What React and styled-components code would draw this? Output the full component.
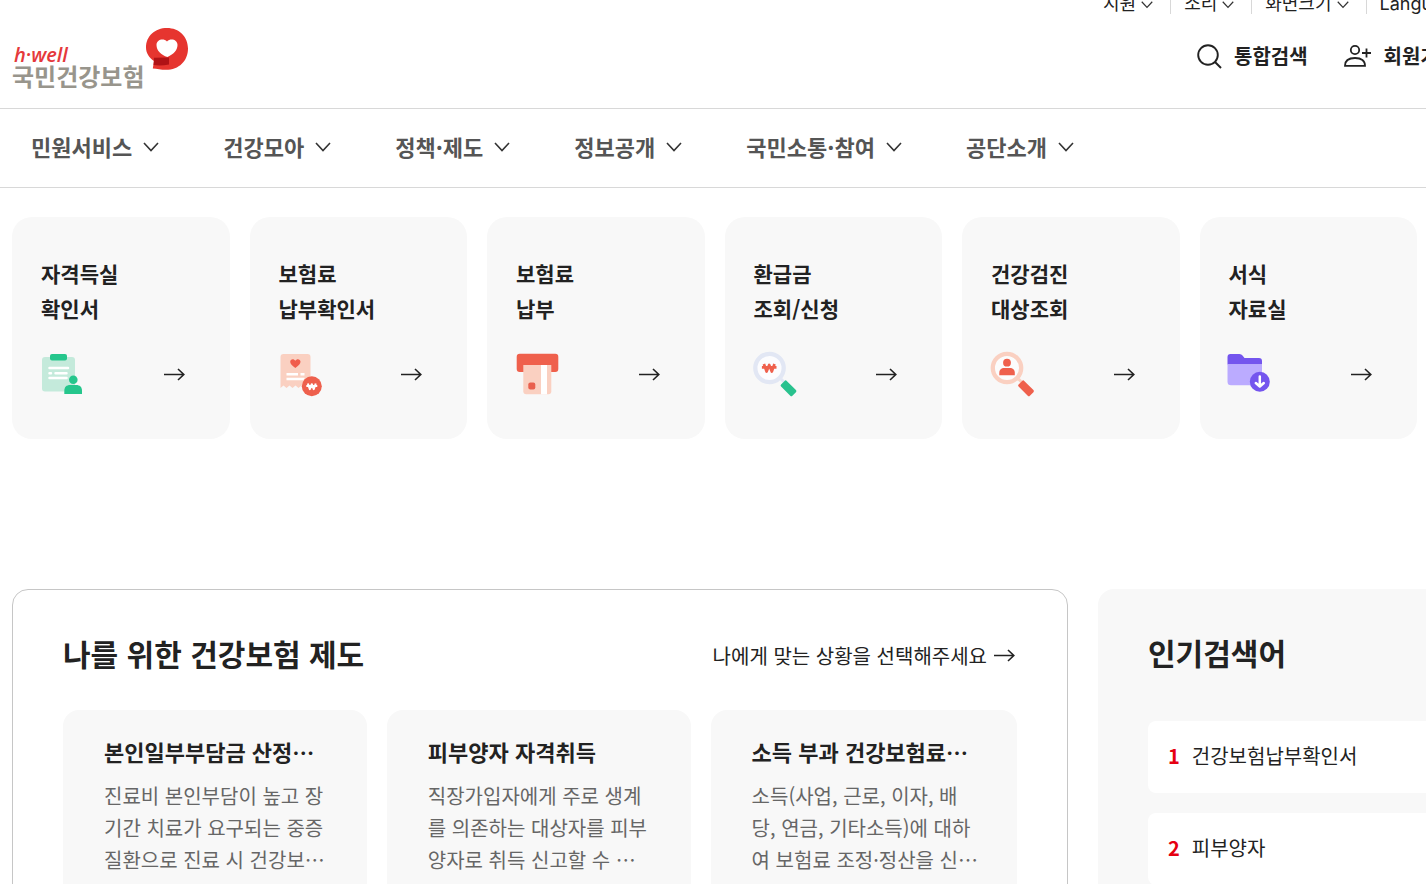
import styled, { createGlobalStyle } from "styled-components";

const GlobalStyle = createGlobalStyle`
  * {
    box-sizing: border-box;
  }

  body {
    margin: 0;
    background: #fff;
    color: #222;
    font-family: "Noto Sans CJK KR", "Noto Sans", sans-serif;
  }

  a {
    color: inherit;
    text-decoration: none;
  }

  button {
    padding: 0;
    border: none;
    background: none;
    color: inherit;
    font: inherit;
    cursor: pointer;
  }

  h1, h2, h3, p, ul, ol {
    margin: 0;
    padding: 0;
    list-style: none;
  }

  svg {
    display: block;
    flex-shrink: 0;
    overflow: visible;
  }
`;

const Page = styled.div`
  height: 100vh;
  overflow: hidden;
`;

const Header = styled.header`
  height: 109px;
  border-bottom: 1px solid #d8d8d8;
`;

const TopBar = styled.div`
  display: grid;
  grid-template-columns: 1fr 323px;
  align-items: end;
  height: 14px;
  overflow: hidden;
`;

const TopMenu = styled.ul`
  grid-column: 2;
  display: flex;
`;

const TopItem = styled.li`
  height: 22px;
  padding-right: 17px;
  margin-right: 13px;
  border-right: 1px solid #d8d8d8;
`;

const TopButton = styled.button`
  display: flex;
  align-items: center;
  gap: 5px;
  height: 22px;
  padding-bottom: 14px;
  font-family: Inter, "Noto Sans CJK KR", sans-serif;
  font-size: 18px;
  line-height: 20px;
  white-space: nowrap;
`;

const HeaderRow = styled.div`
  display: grid;
  grid-template-columns: 1fr 229px;
  align-items: start;
  padding: 14px 0 0 12px;
`;

const Logo = styled.a`
  display: flex;
  gap: 2px;
  height: 60px;
`;

const LogoText = styled.span`
  display: flex;
  flex-direction: column;
  justify-content: flex-end;
  color: #98958c;
  font-size: 24px;
  font-weight: 700;
  line-height: 24px;
  white-space: nowrap;
`;

const LogoSlogan = styled.em`
  padding-left: 2px;
  color: #e5393b;
  font-family: "Open Sans", "Noto Sans", sans-serif;
  font-size: 20px;
  font-weight: 600;
  line-height: 18px;
`;

const Actions = styled.div`
  display: flex;
  gap: 36px;
  padding-top: 13px;
`;

const ActionButton = styled.button`
  display: flex;
  align-items: center;
  gap: 12px;
  font-size: 20px;
  font-weight: 700;
  line-height: 30px;
  white-space: nowrap;
`;

const Nav = styled.nav`
  border-bottom: 1px solid #d8d8d8;
`;

const NavList = styled.ul`
  display: flex;
  gap: 64px;
  padding-left: 31px;
`;

const NavButton = styled.button`
  display: flex;
  align-items: center;
  gap: 11px;
  height: 78px;
  padding-bottom: 4px;
  color: #555;
  font-size: 22px;
  font-weight: 700;
  white-space: nowrap;
`;

const QuickList = styled.ul`
  display: grid;
  grid-template-columns: repeat(6, 1fr);
  gap: 20px;
  padding: 29px 9px 0 12px;
`;

const QuickCard = styled.a`
  display: block;
  padding: 39px 45px 40px 29px;
  border-radius: 20px;
  background: #f8f8f8;
`;

const QuickTitle = styled.strong`
  display: block;
  font-size: 21px;
  font-weight: 700;
  line-height: 35px;
  white-space: pre-line;
`;

const QuickBottom = styled.span`
  display: flex;
  align-items: center;
  justify-content: space-between;
  margin-top: 23px;
`;

const Lower = styled.div`
  display: grid;
  grid-template-columns: minmax(0, 1fr) 328px;
  gap: 30px;
  padding: 150px 0 0 12px;
`;

const Panel = styled.section`
  padding: 40px 50px;
  border: 1px solid #c6c6c6;
  border-radius: 16px;
`;

const PanelHead = styled.div`
  display: flex;
  align-items: center;
  justify-content: space-between;
  margin-bottom: 30px;
`;

const Heading = styled.h2`
  padding-bottom: 4px;
  font-size: 30px;
  font-weight: 700;
  line-height: 46px;
`;

const MoreLink = styled.a`
  display: flex;
  align-items: center;
  gap: 7px;
  padding-right: 2px;
  font-size: 20px;
`;

const PolicyList = styled.ul`
  display: grid;
  grid-template-columns: repeat(3, 1fr);
  gap: 20px;
`;

const PolicyCard = styled.li`
  padding: 23px 39px 40px 41px;
  border-radius: 16px;
  background: #f8f8f8;
`;

const PolicyTitle = styled.h3`
  margin-bottom: 11px;
  font-size: 22px;
  font-weight: 700;
  line-height: 36px;
  white-space: nowrap;
`;

const PolicyText = styled.p`
  color: #666;
  font-size: 20px;
  line-height: 32px;
  white-space: pre;
`;

const Popular = styled.section`
  padding: 40px 0 40px 50px;
  border-radius: 16px 0 0 0;
  background: #f8f8f8;
`;

const PopularList = styled.ol`
  display: grid;
  gap: 20px;
  margin-top: 42px;
`;

const PopularLink = styled.a`
  display: flex;
  align-items: center;
  gap: 12px;
  height: 72px;
  padding: 0 0 3px 20px;
  border-radius: 8px 0 0 8px;
  background: #fff;
  font-size: 20px;
`;

const Rank = styled.b`
  color: #e60012;
`;

const Chevron = ({ size = 16, color = "#333" }) => (
  <svg width={size} height={size} viewBox="0 0 16 16" fill="none" stroke={color} strokeWidth="1.6">
    <path d="M1 5l7 7.500 7-7.500" />
  </svg>
);

const Arrow = () => (
  <svg width="21" height="14" viewBox="0 0 21 14" fill="none" stroke="#222" strokeWidth="1.6">
    <path d="M0 7.500h19.500M14 2L19.800 7.500 14 13" />
  </svg>
);

const LogoMark = () => (
  <svg width="42" height="42" viewBox="0 0 42 42">
    <path
      d="M21 0C33 0 42 8.500 42 20.500C42 33 33 41.800 20 41.800C15 41.800 11 40.800 6.800 40.500L8 33C3 29.500 0 25 0 19.500C0 8 9 0 21 0Z"
      fill="#e6352f"
    />
    <path
      d="M21.500 29C15 27 10.500 22.500 10.500 17C10.500 11.500 17.500 9.800 21 13.500C24.500 9.800 31.500 11.500 31.500 17C31.500 22 28 26 21.500 29Z"
      fill="#fff"
    />
    <path d="M8 29.800L23 29.500V36.500Q15 38 7.600 37Z" fill="#b01216" />
  </svg>
);

const SearchIcon = () => (
  <svg width="25" height="25" viewBox="0 0 25 25" fill="none" stroke="#222" strokeWidth="1.9">
    <circle cx="11" cy="11" r="9.800" />
    <path d="M18 18l6 6" />
  </svg>
);

const JoinIcon = () => (
  <svg width="28" height="24" viewBox="0 0 28 24" fill="none" stroke="#222" strokeWidth="1.8">
    <circle cx="11" cy="6" r="4.200" />
    <path d="M1 21.800C1 16.500 4.500 14 11 14s10 2.500 10 7.800zM18 9h9M22.500 4.500v9" />
  </svg>
);

const Won = ({ x, y, color, scale = 1 }) => (
  <path
    transform={`translate(${x} ${y}) scale(${scale})`}
    d="M-5.300-4l2.700 7.500L0-3 2.600 3.500l2.700-7.500M-7.300-.600H7.300"
    fill="none"
    stroke={color}
    strokeWidth="2.700"
    strokeLinejoin="round"
  />
);

const CertificateIcon = () => (
  <svg width="50" height="50" viewBox="-1 0 50 50">
    <rect y="8" width="33" height="34.500" rx="3" fill="#c4eadb" />
    <rect x="8" y="5" width="17" height="6.500" rx="2" fill="#25c68c" />
    <path
      d="M7.500 19h18.500M7.500 24.200h1.500M13.500 24.200h11M7.500 29h17"
      stroke="#fff"
      strokeWidth="2.500"
      strokeLinecap="round"
    />
    <circle cx="31.300" cy="30.700" r="4.300" fill="#25c68c" />
    <path d="M22.300 45v-3c0-4 2-6 6-6h5.700c4 0 6 2 6 6v3z" fill="#25c68c" />
  </svg>
);

const ReceiptIcon = () => (
  <svg width="50" height="50" viewBox="-1 0 50 50">
    <path
      d="M.500 8q0-3 3-3h24q3 0 3 3v31l-3-2.500-3 2.500-3-2.500-3 2.500-3-2.500-3 2.500-3-2.500-3 2.500-3-2.500-3 2.500z"
      fill="#fad0c1"
    />
    <path
      d="M15.300 19C12 16.500 10.200 14.800 10.200 12.800C10.200 9.800 14 9.300 15.300 11.800C16.600 9.300 20.500 9.800 20.500 12.800C20.500 14.800 18.600 16.500 15.300 19Z"
      fill="#f05d4c"
    />
    <path d="M6.500 25.200h11.500M20.500 25.200h4M6.500 30h18" stroke="#fff" strokeWidth="2.500" />
    <circle cx="31.800" cy="37.300" r="10" fill="#ee604d" />
    <Won x={31.8} y={37.5} color="#fff" scale={0.75} />
  </svg>
);

const PaymentIcon = () => (
  <svg width="50" height="50" viewBox="-1 0 50 50">
    <rect x="-.300" y="4.700" width="41.600" height="18.300" rx="3" fill="#ef604c" />
    <path d="M6.300 16h28v26.300q0 3-3 3h-22q-3 0-3-3z" fill="#fad0c1" />
    <path d="M24 16h6v29.300h-6z" fill="#fff" />
    <rect x="11.300" y="33.500" width="7" height="7" rx="2" fill="#e9604e" />
  </svg>
);

const RefundIcon = () => (
  <svg width="50" height="50" viewBox="-1 0 50 50">
    <path d="M26 30l5 5" stroke="#e2e7f4" strokeWidth="3" />
    <circle cx="14.500" cy="19" r="14.200" fill="#fcfcfe" stroke="#e2e7f4" strokeWidth="4.300" />
    <Won x={14.2} y={19} color="#ef604c" />
    <rect x="-8" y="-4" width="16" height="8" rx="1.500" transform="translate(33.500 39.300) rotate(45)" fill="#29c28e" />
  </svg>
);

const CheckupIcon = () => (
  <svg width="50" height="50" viewBox="-1 0 50 50">
    <path d="M26.500 30l5 5" stroke="#fad0c1" strokeWidth="3" />
    <circle cx="15" cy="19" r="14.200" fill="#fcfcfc" stroke="#fad0c1" strokeWidth="4.300" />
    <circle cx="15" cy="13.700" r="3.900" fill="#ef604c" />
    <path d="M7.300 26.300v-2.300c0-3.500 2-5 5-5h5.500c3 0 5 1.500 5 5v2.300z" fill="#ef604c" />
    <rect x="-8" y="-4" width="16" height="8" rx="1.500" transform="translate(34 39.300) rotate(45)" fill="#ef604c" />
  </svg>
);

const FormsIcon = () => (
  <svg width="50" height="50" viewBox="0 0 50 50">
    <path d="M-1.500 15.500V8q0-3 3-3h9q2 0 3 1.500l2 2.500h14.500q3 0 3 3v3.500z" fill="#7455ee" />
    <path d="M-1.500 15.300H33V36.300H2q-3.500 0-3.500-3.500z" fill="#bbabff" />
    <circle cx="30.800" cy="32.700" r="10" fill="#7455ee" />
    <path
      d="M30.800 27.500v9.500M26.800 34l4 3.500 4-3.500"
      fill="none"
      stroke="#fff"
      strokeWidth="2.500"
      strokeLinecap="round"
      strokeLinejoin="round"
    />
  </svg>
);

const topMenus = ["지원", "소리", "화면크기", "Language"];

const navMenus = ["민원서비스", "건강모아", "정책·제도", "정보공개", "국민소통·참여", "공단소개"];

const quickMenus = [
  { title: "자격득실\n확인서", Icon: CertificateIcon },
  { title: "보험료\n납부확인서", Icon: ReceiptIcon },
  { title: "보험료\n납부", Icon: PaymentIcon },
  { title: "환급금\n조회/신청", Icon: RefundIcon },
  { title: "건강검진\n대상조회", Icon: CheckupIcon },
  { title: "서식\n자료실", Icon: FormsIcon },
];

const policies = [
  {
    title: "본인일부부담금 산정⋯",
    text: "진료비 본인부담이 높고 장\n기간 치료가 요구되는 중증\n질환으로 진료 시 건강보⋯",
  },
  {
    title: "피부양자 자격취득",
    text: "직장가입자에게 주로 생계\n를 의존하는 대상자를 피부\n양자로 취득 신고할 수 ⋯",
  },
  {
    title: "소득 부과 건강보험료⋯",
    text: "소득(사업, 근로, 이자, 배\n당, 연금, 기타소득)에 대하\n여 보험료 조정·정산을 신⋯",
  },
];

const keywords = ["건강보험납부확인서", "피부양자"];

const App = () => {
  return (
    <Page lang="ko">
      <GlobalStyle />
      <Header>
        <TopBar>
          <TopMenu>
            {topMenus.map((name) => (
              <TopItem key={name}>
                <TopButton type="button">
                  {name}
                  <Chevron size={12} />
                </TopButton>
              </TopItem>
            ))}
          </TopMenu>
        </TopBar>
        <HeaderRow>
          <Logo href="#">
            <LogoText>
              <LogoSlogan>h·well</LogoSlogan>
              국민건강보험
            </LogoText>
            <LogoMark />
          </Logo>
          <Actions>
            <ActionButton type="button">
              <SearchIcon />
              통합검색
            </ActionButton>
            <ActionButton type="button">
              <JoinIcon />
              회원가입
            </ActionButton>
          </Actions>
        </HeaderRow>
      </Header>

      <Nav>
        <NavList>
          {navMenus.map((name) => (
            <li key={name}>
              <NavButton type="button">
                {name}
                <Chevron />
              </NavButton>
            </li>
          ))}
        </NavList>
      </Nav>

      <main>
        <QuickList>
          {quickMenus.map(({ title, Icon }) => (
            <li key={title}>
              <QuickCard href="#">
                <QuickTitle>{title}</QuickTitle>
                <QuickBottom>
                  <Icon />
                  <Arrow />
                </QuickBottom>
              </QuickCard>
            </li>
          ))}
        </QuickList>

        <Lower>
          <Panel>
            <PanelHead>
              <Heading>나를 위한 건강보험 제도</Heading>
              <MoreLink href="#">
                나에게 맞는 상황을 선택해주세요
                <Arrow />
              </MoreLink>
            </PanelHead>
            <PolicyList>
              {policies.map((policy) => (
                <PolicyCard key={policy.title}>
                  <PolicyTitle>{policy.title}</PolicyTitle>
                  <PolicyText>{policy.text}</PolicyText>
                </PolicyCard>
              ))}
            </PolicyList>
          </Panel>

          <Popular>
            <Heading>인기검색어</Heading>
            <PopularList>
              {keywords.map((keyword, index) => (
                <li key={keyword}>
                  <PopularLink href="#">
                    <Rank>{index + 1}</Rank>
                    {keyword}
                  </PopularLink>
                </li>
              ))}
            </PopularList>
          </Popular>
        </Lower>
      </main>
    </Page>
  );
};

export default App;
